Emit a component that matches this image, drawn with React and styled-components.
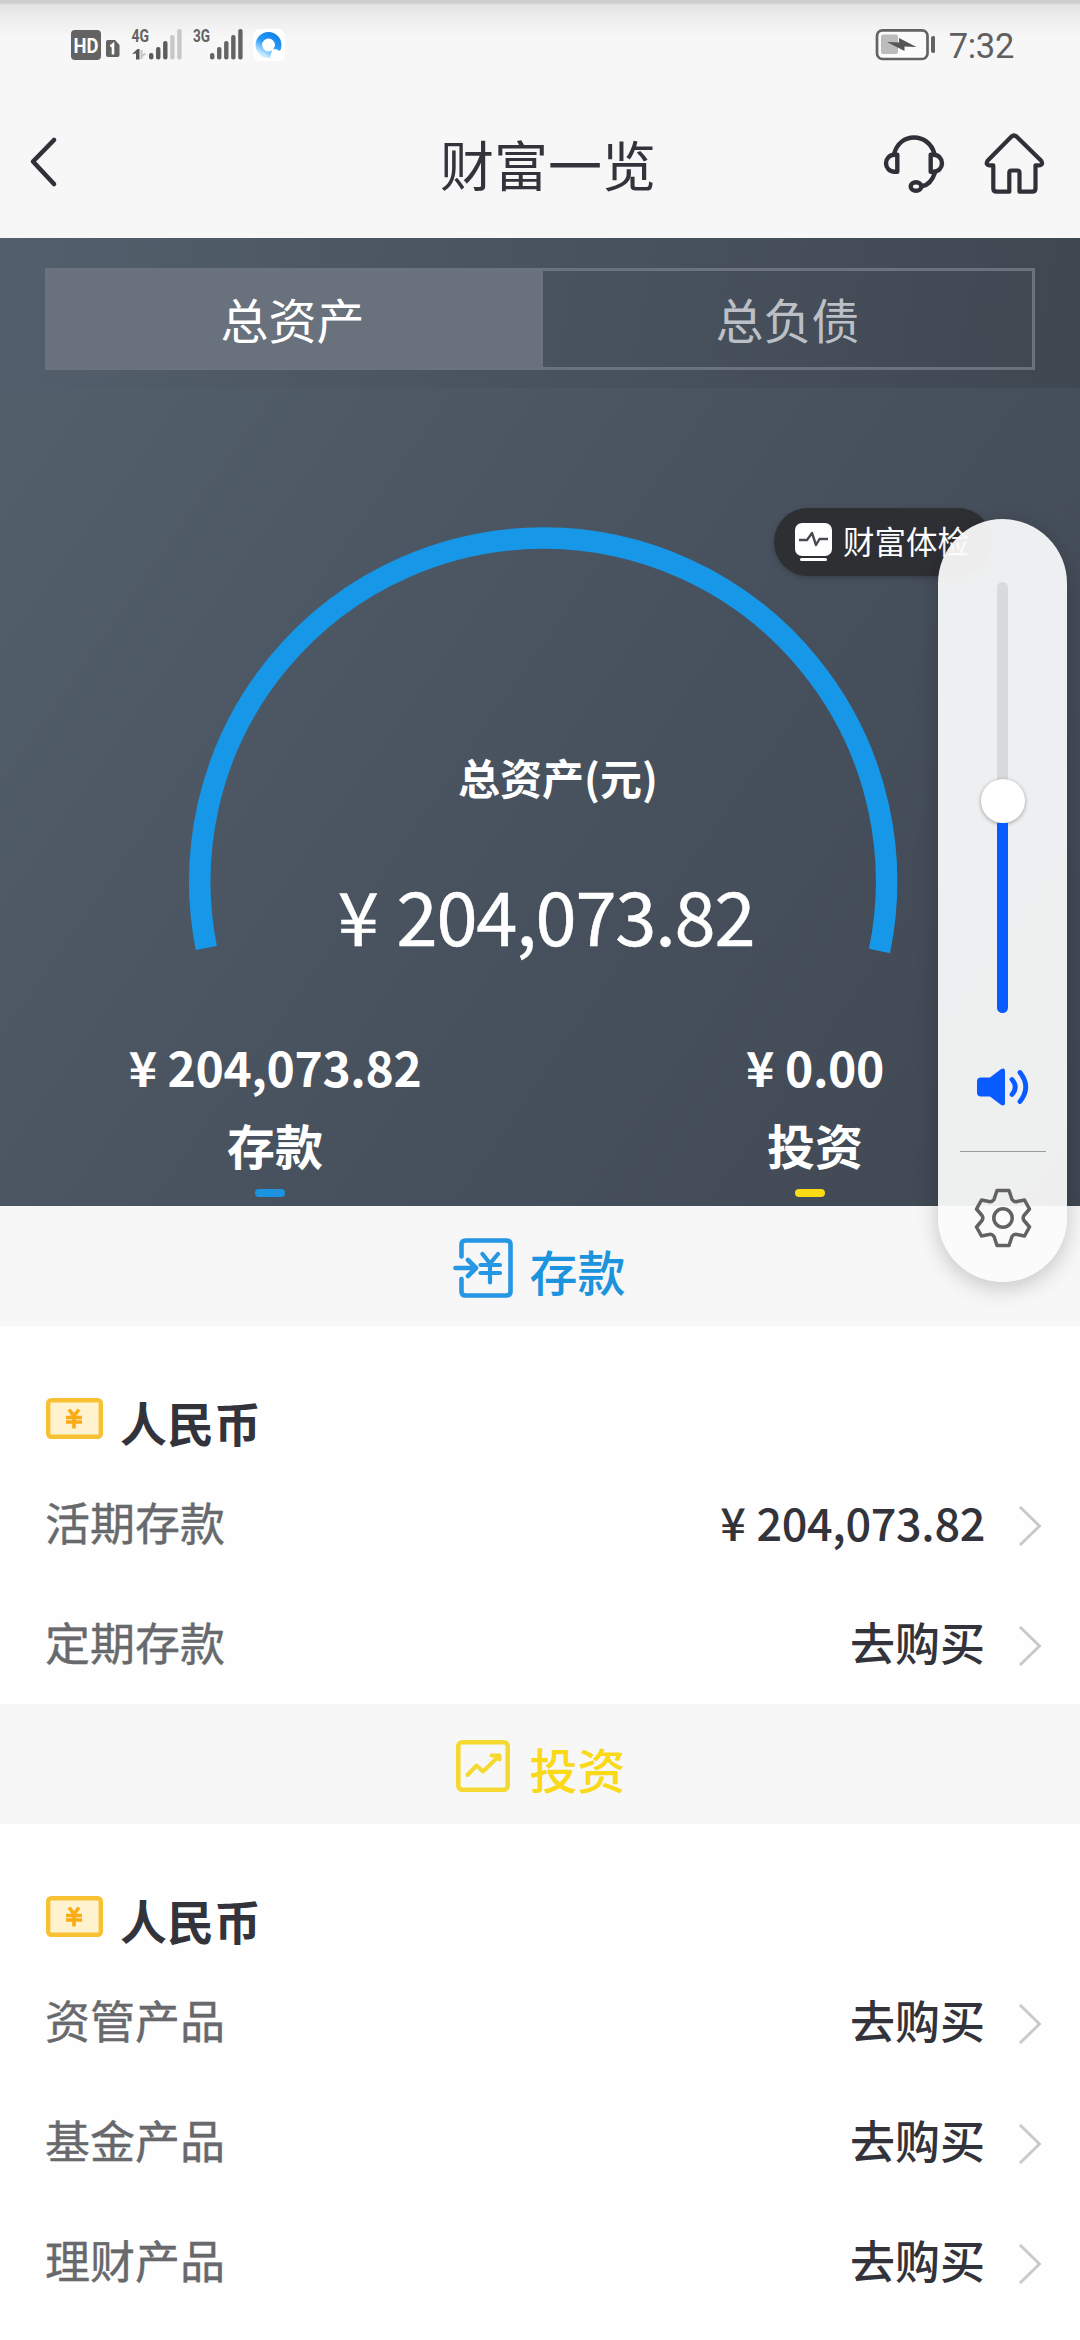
import React from 'react';
import styled, { createGlobalStyle } from 'styled-components';

const GlobalStyle = createGlobalStyle`
  *, *::before, *::after { box-sizing: border-box; }
  body {
    margin: 0;
    background: #fefefe;
    font-family: "Noto Sans CJK SC", "Noto Sans", sans-serif;
    color: #33333b;
  }
  svg { display: block; flex: none; }
`;

const Screen = styled.main`
  position: relative;
  width: 1080px;
  height: 2340px;
  overflow: hidden;
  display: flex;
  flex-direction: column;
`;

const TopArea = styled.header`
  height: 238px;
  flex: none;
  background: linear-gradient(#cfcfcf 0, #cfcfcf 3px, #e4e4e4 5px, #ededed 18px, #f7f7f7 38px);
`;

const StatusBar = styled.div`
  height: 90px;
  display: flex;
  align-items: center;
  justify-content: space-between;
  padding: 0 66px 0 70px;
`;

const StatusGroup = styled.div`
  display: flex;
  align-items: center;
`;

const Clock = styled.time`
  font: 400 34.5px/50px Roboto, sans-serif;
  letter-spacing: -0.3px;
  color: #5f5f5f;
  margin-left: 14px;
  padding-top: 2px;
`;

const TitleBar = styled.div`
  height: 148px;
  display: grid;
  grid-template-columns: 1fr auto 1fr;
  align-items: center;
  padding: 0 35px 0 28px;
`;

const PageTitle = styled.h1`
  margin: 0 0 0 23px;
  font-size: 54px;
  line-height: 80px;
  font-weight: 400;
  padding-bottom: 1px;
`;

const IconButton = styled.button`
  border: 0;
  padding: 0;
  background: none;
  color: inherit;
`;

const Actions = styled.div`
  display: flex;
  justify-content: flex-end;
  gap: 38px;
`;

const TabsBand = styled.nav`
  height: 150px;
  flex: none;
  padding: 30px 45px 18px;
  background: linear-gradient(100deg, #535f6c 0%, #49535f 50%, #3f4751 100%);
`;

const Tabs = styled.div`
  height: 102px;
  display: grid;
  grid-template-columns: 498px 1fr;
`;

const Tab = styled.button`
  border: 3px solid #69727d;
  border-left-width: ${p => (p.$active ? '3px' : '0')};
  background: ${p => (p.$active ? '#69717d' : 'transparent')};
  color: ${p => (p.$active ? '#fff' : '#bcc0c6')};
  font: inherit;
  font-size: 48px;
  line-height: 70px;
  padding: 0 ${p => (p.$active ? '3px' : '0')} 2px 0;
`;

const Summary = styled.section`
  height: 818px;
  flex: none;
  position: relative;
  background: linear-gradient(125deg, #535f6b 0%, #505c68 12%, #47515d 55%, #3f4752 100%);
  color: #fff;
`;

const Gauge = styled.div`
  height: 632px;
  display: grid;
  > * { grid-area: 1 / 1; }
`;

const GaugeText = styled.div`
  display: flex;
  flex-direction: column;
  align-items: center;
  padding-top: 354px;
`;

const GaugeLabel = styled.div`
  font-size: 42px;
  line-height: 70px;
  font-weight: 700;
  padding-left: 36px;
`;

const GaugeAmount = styled.div`
  margin-top: 52px;
  font-size: 74px;
  line-height: 100px;
  letter-spacing: -1.2px;
  -webkit-text-stroke: 0.5px currentColor;
  padding-left: 12px;
`;

const Yen = styled.span`
  margin-right: ${p => p.$gap}px;
`;

const Stats = styled.div`
  display: grid;
  grid-template-columns: 1fr 1fr;
`;

const Stat = styled.div`
  display: flex;
  flex-direction: column;
  align-items: center;
  font-size: 48px;
  line-height: 78px;
  font-weight: 700;
  padding-top: 7px;
`;

const StatText = styled.div`
  padding-left: 10px;
`;

const StatAmount = styled(StatText)`
  letter-spacing: -0.4px;
`;

const Dash = styled.div`
  margin-top: 6px;
  width: 30px;
  height: 8px;
  border-radius: 4px;
  background: ${p => p.$color};
`;

const CheckupPill = styled.button`
  position: absolute;
  left: 774px;
  top: 120px;
  width: 218px;
  height: 68px;
  border: 0;
  border-radius: 34px;
  background: #2e2f33;
  color: #fff;
  display: flex;
  align-items: center;
  gap: 11px;
  padding: 0 0 0 21px;
  font: inherit;
  font-size: 31.5px;
  white-space: nowrap;
  box-shadow: 0 2px 5px rgba(30, 34, 40, 0.35);
`;

const PillLabel = styled.span`
  padding-bottom: 5px;
`;

const SectionBar = styled.div`
  height: 120px;
  flex: none;
  display: flex;
  align-items: center;
  justify-content: center;
  gap: 16px;
  background: #f7f7f7;
  color: ${p => p.$color};
  font-size: 48px;
  line-height: 70px;
  font-weight: 500;
  padding: 8px 1px 0 0;
  > svg { margin-bottom: 4px; }
`;

const Holdings = styled.section`
  flex: none;
  padding: 60px 38px 0 46px;
  background: #fefefe;
`;

const CurrencyTitle = styled.h2`
  margin: 0;
  height: 78px;
  display: flex;
  align-items: center;
  gap: 17px;
  font-size: 47px;
  line-height: 70px;
  font-weight: 700;
  padding-bottom: 7px;
  > svg { margin-bottom: 6px; }
`;

const Row = styled.div`
  height: 120px;
  display: flex;
  align-items: center;
  font-size: 45px;
  line-height: 66px;
  > svg { margin: 4px 0 0 33px; }
`;

const RowLabel = styled.span`
  flex: 1;
  color: #67696c;
  padding-bottom: 4px;
  margin-left: -1px;
  -webkit-text-stroke: 0.4px currentColor;
`;

const RowValue = styled.span`
  font-weight: 500;
  padding-bottom: 4px;
`;

const Amount = styled.span`
  letter-spacing: -0.35px;
`;

const VolumePanel = styled.aside`
  position: absolute;
  left: 938px;
  top: 519px;
  width: 129px;
  height: 763px;
  border-radius: 65px;
  background: rgba(251, 251, 251, 0.935);
  box-shadow: 0 6px 22px rgba(0, 0, 0, 0.2);
  display: flex;
  flex-direction: column;
  align-items: center;
  padding-top: 63px;
`;

const Track = styled.div`
  width: 11px;
  height: 431px;
  border-radius: 6px;
  background: #d8dbdb;
  display: flex;
  flex-direction: column;
  align-items: center;
  justify-content: flex-end;
`;

const Knob = styled.div`
  width: 44px;
  height: 44px;
  flex: none;
  border-radius: 50%;
  background: #fff;
  box-shadow: 0 1px 4px rgba(0, 0, 0, 0.35);
`;

const Level = styled.div`
  width: 11px;
  height: 190px;
  border-radius: 0 0 6px 6px;
  background: #0a5bff;
`;

const Divider = styled.div`
  width: 86px;
  height: 1px;
  margin: 45px 0 36px;
  background: #9a9c9c;
`;

const SpeakerSlot = styled.div`
  margin-top: 55px;
`;

function CarrierIcons() {
  const bars = [53, 47, 41, 35, 29];
  return (
    <svg width="220" height="40" viewBox="70 25 220 40">
      <defs>
        <linearGradient id="browserRing" x1="0.8" y1="0" x2="0.2" y2="1">
          <stop offset="0" stopColor="#1583ee" />
          <stop offset="0.5" stopColor="#2b9df5" />
          <stop offset="1" stopColor="#c9ecff" />
        </linearGradient>
      </defs>
      <rect x="71" y="30" width="30" height="30" rx="4" fill="#636363" />
      <text x="86" y="52.5" textAnchor="middle" textLength="25" lengthAdjust="spacingAndGlyphs" fontFamily="Roboto, sans-serif" fontWeight="700" fontSize="20" fill="#fff">HD</text>
      <path d="M108 40h7l4.500 5v10q0 2-2 2h-9.500q-2 0-2-2v-13q0-2 2-2z" fill="#636363" />
      <path d="M110.500 46.500l2.500-2v10" fill="none" stroke="#fff" strokeWidth="2.600" />
      <text x="131.500" y="42" textLength="17.500" lengthAdjust="spacingAndGlyphs" fontFamily="Roboto, sans-serif" fontWeight="700" fontSize="18" fill="#636363">4G</text>
      <path d="M132 54l5.500-5h2v10.500h-3.500v-6z" fill="#555" />
      <path d="M141.500 50v9M142 56l3.500-2.500" stroke="#c6c6c6" strokeWidth="2" fill="none" />
      {bars.map((y, i) => (
        <rect key={y} x={149 + i * 7.05} y={y} width="4.400" height={59.5 - y} rx="2" fill={i > 2 ? '#c8c8c8' : '#5c5c5c'} />
      ))}
      <text x="193" y="42" textLength="17" lengthAdjust="spacingAndGlyphs" fontFamily="Roboto, sans-serif" fontWeight="700" fontSize="18" fill="#636363">3G</text>
      {bars.map((y, i) => (
        <rect key={y} x={210 + i * 7.05} y={y} width="4.400" height={59.5 - y} rx="2" fill="#636363" />
      ))}
      <rect x="253" y="29" width="32" height="32" rx="7" fill="#fff" />
      <circle cx="268.500" cy="45" r="9.700" fill="none" stroke="url(#browserRing)" strokeWidth="6.500" />
      <path d="M272 50q4-2 6.500 0.500q4-.5 4.500 3t-3 4h-10z" fill="#fff" />
    </svg>
  );
}

function BatteryIcon() {
  return (
    <svg width="60" height="34" viewBox="874 28 60 34">
      <rect x="876" y="30.300" width="50.500" height="28.700" rx="5.500" fill="#fbfbfb" stroke="#636363" strokeWidth="2.700" />
      <rect x="880" y="34.500" width="17" height="19.500" rx="2" fill="#bcbcbc" />
      <path d="M886 42l12 0.500v-4.500l17.500 9l-12-.5v4.500z" fill="#555" />
      <rect x="930" y="36" width="4.300" height="17" rx="2" fill="#636363" />
    </svg>
  );
}

function BackIcon() {
  return (
    <svg width="32" height="54" viewBox="28 136 32 54" fill="none" stroke="#303036" strokeWidth="4.600" strokeLinecap="round" strokeLinejoin="round">
      <path d="M54 141L33 162.500L54 185" />
    </svg>
  );
}

function HeadsetIcon() {
  return (
    <svg width="62" height="62" viewBox="882 132 62 62" fill="none" stroke="#303038" strokeWidth="4.400" strokeLinejoin="round" strokeLinecap="round">
      <path d="M893 153C896 142 904 136.500 913 136.500S930.500 142 933.500 153" />
      <path d="M896.300 153.800h-3a8.300 8.500 0 0 0 0 17h3z" />
      <path d="M929.700 153.800h3a8.300 8.500 0 0 1 0 17h-3z" />
      <path d="M934 171.500C931.500 179 927 184 921.500 185" />
      <ellipse cx="915" cy="185.500" rx="5.300" ry="4.300" />
    </svg>
  );
}

function HomeIcon() {
  return (
    <svg width="62" height="64" viewBox="982 131 62 64" fill="none" stroke="#303038" strokeWidth="4.200" strokeLinejoin="round">
      <path d="M1010.500 135.500q2.500-2 5 0l24.500 24q3 4.500-2 4.800h-3.500v23q0 3.400-3.400 3.400h-12.600v-19q0-2.200-2.200-2.200h-5.800q-2.200 0-2.200 2.200v19h-12.600q-3.400 0-3.400-3.400v-23h-3.500q-5-.3-2-4.800z" />
    </svg>
  );
}

function CheckupIcon() {
  return (
    <svg width="37" height="38" viewBox="0 0 37 38">
      <rect width="37" height="33" rx="7" fill="#fff" />
      <path d="M4 17h8l5-7l4 12l3.500-6H33" fill="none" stroke="#4a4b50" strokeWidth="2.400" strokeLinejoin="round" />
      <rect x="5" y="35" width="27" height="3" rx="1.500" fill="#fff" />
    </svg>
  );
}

function DepositIcon() {
  return (
    <svg width="60" height="60" viewBox="0 0 60 60" fill="none" stroke="#2597e4" strokeWidth="4.600" strokeLinecap="round" strokeLinejoin="round">
      <path d="M8.500 18.500V6.500q0-4 4-4h41q4 0 4 4v47q0 4-4 4h-41q-4 0-4-4V41" />
      <path d="M2.500 30h20M15 22l8 8l-8 8" />
      <path d="M29.500 16l7.500 9.500l8-9.500M37 25.500v19M27.500 27h19.500M27.500 35h19.500" strokeWidth="4.200" />
    </svg>
  );
}

function InvestIcon() {
  return (
    <svg width="60" height="52" viewBox="-3 0 60 52" fill="none" stroke="#f5d930" strokeWidth="4" strokeLinecap="round" strokeLinejoin="round">
      <rect x="2.300" y="2.300" width="49.400" height="47.400" rx="4" strokeWidth="4.600" />
      <path d="M11.500 35l9-9.500l6.500 6L42 17M35.500 15.500h8v4" />
    </svg>
  );
}

function CashIcon() {
  return (
    <svg width="57" height="41" viewBox="0 0 57 41">
      <rect x="2.200" y="2.200" width="52.600" height="36.600" rx="3" fill="#fff3cf" stroke="#f8c033" strokeWidth="4.400" />
      <path d="M23 11.500l5 6.500l5-6.500M28 18v12.500M20 19.500h16M20 24h16" fill="none" stroke="#f9ac15" strokeWidth="3.600" />
    </svg>
  );
}

function ChevronIcon() {
  return (
    <svg width="24" height="42" viewBox="0 0 24 42" fill="none" stroke="#c9c9c9" strokeWidth="2.900">
      <path d="M2 2L21.500 21L2 40" />
    </svg>
  );
}

function SpeakerIcon() {
  return (
    <svg width="52" height="38" viewBox="0 0 52 38" fill="#0a5bff">
      <path d="M4 9.500h9L23.500 1.500Q28 -1 28 3.500v31q0 4.500-4.500 2L13 28.500H4q-4 0-4-4v-11q0-4 4-4z" />
      <path d="M35 11.500q6.500 7.500 0 15M43 4.500q11.500 14.500 0 29" fill="none" stroke="#0a5bff" strokeWidth="4.800" strokeLinecap="round" />
    </svg>
  );
}

function GearIcon() {
  return (
    <svg width="58" height="60" viewBox="-29 -30 58 60" fill="none" stroke="#626262" strokeWidth="3.500" strokeLinejoin="round">
      <path d="M-6-27.500H6L9-18.500Q11-15.800 14-16.500L21.500-18L26.500-9L21-2.500Q19.300 0 21 2.500L26.500 9L21.500 18L14 16.500Q11 15.800 9 18.500L6 27.500H-6L-9 18.500Q-11 15.800-14 16.500L-21.500 18L-26.500 9L-21 2.500Q-19.300 0-21-2.500L-26.500-9L-21.500-18L-14-16.500Q-11-15.800-9-18.500Z" />
      <circle r="9.200" />
    </svg>
  );
}

function HoldingList({ items }) {
  return (
    <Holdings>
      <CurrencyTitle><CashIcon />人民币</CurrencyTitle>
      {items.map(item => (
        <Row key={item.name}>
          <RowLabel>{item.name}</RowLabel>
          <RowValue>
            {item.amount ? <Amount><Yen $gap={11}>¥</Yen>{item.amount}</Amount> : '去购买'}
          </RowValue>
          <ChevronIcon />
        </Row>
      ))}
    </Holdings>
  );
}

const stats = [
  { name: '存款', amount: '204,073.82', color: '#1b93e0' },
  { name: '投资', amount: '0.00', color: '#fadb14' },
];

export default function App() {
  return (
    <Screen>
      <GlobalStyle />
      <TopArea>
        <StatusBar>
          <StatusGroup><CarrierIcons /></StatusGroup>
          <StatusGroup><BatteryIcon /><Clock>7:32</Clock></StatusGroup>
        </StatusBar>
        <TitleBar>
          <div><IconButton aria-label="返回"><BackIcon /></IconButton></div>
          <PageTitle>财富一览</PageTitle>
          <Actions>
            <IconButton aria-label="客服"><HeadsetIcon /></IconButton>
            <IconButton aria-label="首页"><HomeIcon /></IconButton>
          </Actions>
        </TitleBar>
      </TopArea>

      <TabsBand>
        <Tabs>
          <Tab $active>总资产</Tab>
          <Tab>总负债</Tab>
        </Tabs>
      </TabsBand>

      <Summary>
        <Gauge>
          <svg width="1080" height="632" viewBox="0 0 1080 632" fill="none">
            <path d="M206.300 560A343.400 343.400 0 1 1 879.500 563" stroke="#1797e8" strokeWidth="21.500" />
          </svg>
          <GaugeText>
            <GaugeLabel>总资产(元)</GaugeLabel>
            <GaugeAmount><Yen $gap={19}>¥</Yen>204,073.82</GaugeAmount>
          </GaugeText>
        </Gauge>
        <Stats>
          {stats.map(stat => (
            <Stat key={stat.name}>
              <StatAmount><Yen $gap={11}>¥</Yen>{stat.amount}</StatAmount>
              <StatText>{stat.name}</StatText>
              <Dash $color={stat.color} />
            </Stat>
          ))}
        </Stats>
        <CheckupPill><CheckupIcon /><PillLabel>财富体检</PillLabel></CheckupPill>
      </Summary>

      <SectionBar $color="#1c93dd"><DepositIcon />存款</SectionBar>
      <HoldingList items={[{ name: '活期存款', amount: '204,073.82' }, { name: '定期存款' }]} />
      <SectionBar $color="#f9d918"><InvestIcon />投资</SectionBar>
      <HoldingList items={[{ name: '资管产品' }, { name: '基金产品' }, { name: '理财产品' }]} />

      <VolumePanel>
        <Track><Knob /><Level /></Track>
        <SpeakerSlot><SpeakerIcon /></SpeakerSlot>
        <Divider />
        <GearIcon />
      </VolumePanel>
    </Screen>
  );
}
